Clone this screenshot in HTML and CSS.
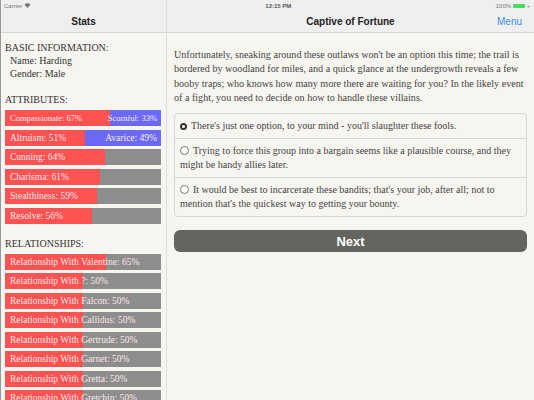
FILE: index.html
```html
<!DOCTYPE html>
<html lang="en">
<head>
    <meta charset="UTF-8">
    <meta name="viewport" content="width=device-width, initial-scale=1.0">
    <title>Captive of Fortune</title>
    <link rel="stylesheet" href="styles.css">
</head>
<body>

<div class="status">
    <span class="carrier">Carrier
        <svg width="7" height="5" viewBox="0 0 14 10"><path d="M7 10 L1 3 Q7 -2 13 3 Z" fill="#777"/></svg>
    </span>
    <span class="clock">12:15 PM</span>
    <span class="battery">100% <span class="cell"></span><span class="plug">+</span></span>
</div>

<div class="app">
    <div class="side">
        <div class="nav"><span class="title">Stats</span></div>
        <div class="side-body">
            <div class="heading">BASIC INFORMATION:</div>
            <div class="info">Name: Harding</div>
            <div class="info">Gender: Male</div>

            <div class="heading gap">ATTRIBUTES:</div>
            <div class="bar duo small" style="--p:67%"><span>Compassionate: 67%</span><span>Scornful: 33%</span></div>
            <div class="bar duo" style="--p:51%"><span>Altruism: 51%</span><span>Avarice: 49%</span></div>
            <div class="bar" style="--p:64%"><span>Cunning: 64%</span></div>
            <div class="bar" style="--p:61%"><span>Charisma: 61%</span></div>
            <div class="bar" style="--p:59%"><span>Stealthiness: 59%</span></div>
            <div class="bar" style="--p:56%"><span>Resolve: 56%</span></div>

            <div class="heading gap">RELATIONSHIPS:</div>
            <div class="bar" style="--p:65%"><span>Relationship With Valentine: 65%</span></div>
            <div class="bar" style="--p:50%"><span>Relationship With ?: 50%</span></div>
            <div class="bar" style="--p:50%"><span>Relationship With Falcon: 50%</span></div>
            <div class="bar" style="--p:50%"><span>Relationship With Callidus: 50%</span></div>
            <div class="bar" style="--p:50%"><span>Relationship With Gertrude: 50%</span></div>
            <div class="bar" style="--p:50%"><span>Relationship With Garnet: 50%</span></div>
            <div class="bar" style="--p:50%"><span>Relationship With Gretta: 50%</span></div>
            <div class="bar" style="--p:50%"><span>Relationship With Gretchin: 50%</span></div>
        </div>
    </div>

    <div class="main">
        <div class="nav"><span class="title">Captive of Fortune</span><span class="menu">Menu</span></div>
        <div class="main-body">
            <p class="story">Unfortunately, sneaking around these outlaws won't be an option this time; the trail is bordered by woodland for miles, and a quick glance at the undergrowth reveals a few booby traps; who knows how many more there are waiting for you? In the likely event of a fight, you need to decide on how to handle these villains.</p>

            <div class="choices">
                <div class="choice"><span class="radio on"></span>There's just one option, to your mind - you'll slaughter these fools.</div>
                <div class="choice"><span class="radio"></span>Trying to force this group into a bargain seems like a plausible course, and they might be handy allies later.</div>
                <div class="choice"><span class="radio"></span>It would be best to incarcerate these bandits; that's your job, after all; not to mention that's the quickest way to getting your bounty.</div>
            </div>

            <button class="next">Next</button>
        </div>
    </div>
</div>

</body>
</html>
```

FILE: styles.css
```css
body {
    margin: 0;
    background-color: #f7f5f0;
    font-family: "Liberation Serif", serif;
    color: #444;
    width: 534px;
    height: 400px;
    overflow: hidden;
}
.status {
    position: absolute;
    z-index: 2;
    top: 0;
    left: 0;
    width: 534px;
    height: 11px;
    display: flex;
    justify-content: space-between;
    align-items: center;
    padding: 0 4px;
    box-sizing: border-box;
    font-family: "Liberation Sans", sans-serif;
    font-size: 6px;
    color: #777;
}
.clock {
    font-weight: bold;
    color: #555;
    margin-left: 30px;
}
.battery {
    display: flex;
    align-items: center;
    gap: 2px;
}
.cell {
    width: 12px;
    height: 4px;
    background-color: #4cd964;
    border-radius: 1px;
}
.plug {
    font-size: 5px;
}
.app {
    display: grid;
    grid-template-columns: 166px 1fr;
    height: 400px;
    border-left: 1px solid #999;
}
.side {
    border-right: 1px solid #ddd;
}
.nav {
    height: 33px;
    box-sizing: border-box;
    padding-top: 11px;
    background-color: #efeff0;
    border-bottom: 1px solid #d6d6d6;
    display: flex;
    align-items: center;
    justify-content: center;
    position: relative;
    font-family: "Liberation Sans", sans-serif;
    font-size: 10px;
}
.title {
    font-weight: bold;
    color: #222;
}
.menu {
    position: absolute;
    right: 12px;
    top: 16px;
    color: #3b8ef0;
}
.side-body {
    padding: 8px 5px 0 4px;
    font-size: 10px;
}
.heading {
    line-height: 13px;
    color: #333;
}
.heading.gap {
    margin-top: 13px;
    margin-bottom: 4px;
}
.info {
    line-height: 13px;
    padding-left: 5px;
    color: #333;
}
.bar {
    height: 16px;
    margin-bottom: 3.5px;
    background: linear-gradient(to right, #fc5252 var(--p), #8d8d8d var(--p));
    color: #fbe8e8;
    display: flex;
    justify-content: space-between;
    align-items: center;
    padding: 0 4px 0 5px;
    white-space: nowrap;
    font-size: 9.5px;
}
.bar.duo {
    background: linear-gradient(to right, #fc5252 var(--p), #6a6af7 var(--p));
}
.bar.small {
    font-size: 8.5px;
}
.main-body {
    padding: 15px 7px 0 7px;
}
.story {
    margin: 0 0 8px 0;
    font-size: 10.1px;
    line-height: 14.3px;
}
.choices {
    border: 1px solid #d6d6d6;
    border-radius: 4px;
    background-color: #f7f5f0;
}
.choice {
    padding: 5px 2px 5px 5px;
    font-size: 10px;
    line-height: 14px;
    border-top: 1px solid #d6d6d6;
}
.choice:first-child {
    border-top: none;
}
.radio {
    display: inline-block;
    width: 7px;
    height: 7px;
    border: 1px solid #777;
    border-radius: 50%;
    background-color: #fff;
    margin-right: 4px;
    vertical-align: -1px;
}
.radio.on {
    background-color: #fff;
    border: 2.5px solid #333;
    width: 3px;
    height: 3px;
}
.next {
    display: block;
    width: 100%;
    height: 22px;
    margin-top: 13px;
    border: none;
    border-radius: 6px;
    background-color: #656560;
    color: #fff;
    font-family: "Liberation Sans", sans-serif;
    font-weight: bold;
    font-size: 13px;
}
```
